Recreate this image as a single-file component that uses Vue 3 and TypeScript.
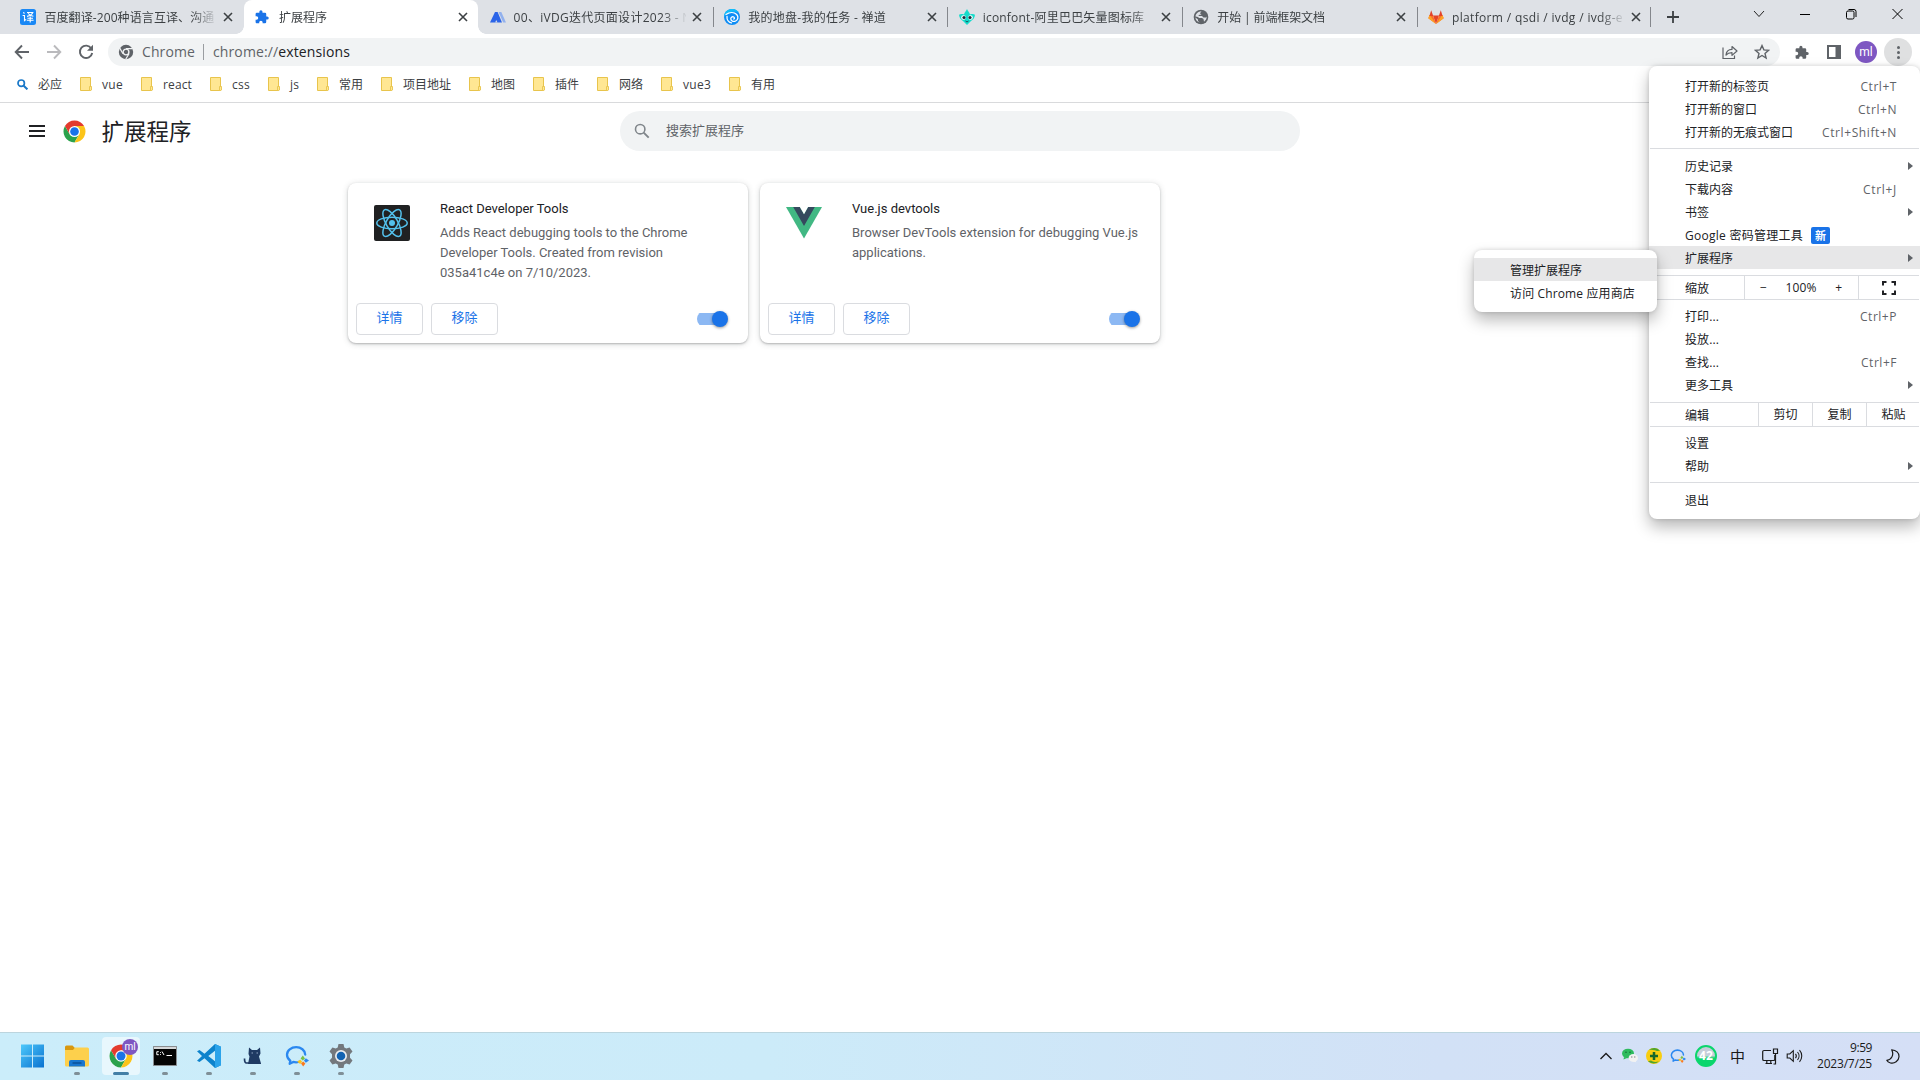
<script setup lang="ts">
interface Tab {
  title: string
  icon: string
  width?: number
  active?: boolean
  line?: boolean
}
interface Bookmark {
  label: string
  width: number
}
interface MenuRow {
  label: string
  keys?: string
  keysWidth?: number
  width?: number
  arrow?: boolean
  badge?: string
  on?: boolean
}
interface Extension {
  name: string
  nameWidth: number
  lines: { text: string; width: number }[]
  icon: 'react' | 'vue'
}

// Spreads a label's letters so that it takes up the given width.
const vFit = {
  mounted(el: HTMLElement, binding: { value?: number }) {
    if (!binding.value) return
    const natural = el.getBoundingClientRect().width
    const count = Array.from(el.textContent ?? '').length
    if (count > 0) el.style.letterSpacing = `${(binding.value - natural) / count}px`
  },
}

const tabs: Tab[] = [
  { title: '百度翻译-200种语言互译、沟通', icon: 'fanyi', width: 170 },
  { title: '扩展程序', icon: 'puzzle', active: true },
  { title: '00、iVDG迭代页面设计2023 - N', icon: 'axure', width: 178, line: true },
  { title: '我的地盘-我的任务 - 禅道', icon: 'zentao', width: 138, line: true },
  { title: 'iconfont-阿里巴巴矢量图标库', icon: 'iconfont', width: 161.5, line: true },
  { title: '开始 | 前端框架文档', icon: 'globe', width: 107.5, line: true },
  { title: 'platform / qsdi / ivdg / ivdg-e', icon: 'gitlab', width: 171, line: true },
]

const bookmarks: Bookmark[] = [
  { label: 'vue', width: 21 },
  { label: 'react', width: 29 },
  { label: 'css', width: 18 },
  { label: 'js', width: 9 },
  { label: '常用', width: 24 },
  { label: '项目地址', width: 48 },
  { label: '地图', width: 24 },
  { label: '插件', width: 24 },
  { label: '网络', width: 24 },
  { label: 'vue3', width: 28 },
  { label: '有用', width: 24 },
]

const extensions: Extension[] = [
  {
    name: 'React Developer Tools',
    nameWidth: 128.5,
    icon: 'react',
    lines: [
      { text: 'Adds React debugging tools to the Chrome', width: 247.5 },
      { text: 'Developer Tools. Created from revision', width: 223 },
      { text: '035a41c4e on 7/10/2023.', width: 151 },
    ],
  },
  {
    name: 'Vue.js devtools',
    nameWidth: 88,
    icon: 'vue',
    lines: [
      { text: 'Browser DevTools extension for debugging Vue.js', width: 286 },
      { text: 'applications.', width: 74 },
    ],
  },
]

const groupNew: MenuRow[] = [
  { label: '打开新的标签页', keys: 'Ctrl+T', keysWidth: 36.5 },
  { label: '打开新的窗口', keys: 'Ctrl+N', keysWidth: 39 },
  { label: '打开新的无痕式窗口', keys: 'Ctrl+Shift+N', keysWidth: 75 },
]
const groupData: MenuRow[] = [
  { label: '历史记录', arrow: true },
  { label: '下载内容', keys: 'Ctrl+J', keysWidth: 34 },
  { label: '书签', arrow: true },
  { label: 'Google 密码管理工具', width: 118, badge: '新' },
  { label: '扩展程序', arrow: true, on: true },
]
const groupPage: MenuRow[] = [
  { label: '打印...', width: 34, keys: 'Ctrl+P', keysWidth: 37 },
  { label: '投放...', width: 34 },
  { label: '查找...', width: 34, keys: 'Ctrl+F', keysWidth: 36 },
  { label: '更多工具', arrow: true },
]
const groupSettings: MenuRow[] = [{ label: '设置' }, { label: '帮助', arrow: true }]
const groupExit: MenuRow[] = [{ label: '退出' }]

const apps = ['start', 'files', 'chrome', 'cmd', 'vscode', 'cat', 'wecom', 'settings']
</script>

<template>
  <div class="screen">
    <svg width="0" height="0" class="defs">
      <defs>
        <symbol id="g-puzzle" viewBox="0 0 24 24">
          <path d="M20.5 11H19V7a2 2 0 0 0-2-2h-4V3.5a2.5 2.5 0 0 0-5 0V5H4a2 2 0 0 0-2 2v3.8h1.5a2.7 2.7 0 0 1 0 5.4H2V20c0 1.100.9 2 2 2h3.800v-1.500a2.700 2.700 0 0 1 5.400 0V22H17a2 2 0 0 0 2-2v-4h1.500a2.500 2.500 0 0 0 0-5z" fill="currentColor" />
        </symbol>
        <symbol id="g-chrome" viewBox="0 0 48 48">
          <circle cx="24" cy="24" r="23" fill="#fff" />
          <path d="M4.100 12.500A23 23 0 0 0 24 47l10-17.300L24 24 14 29.700z" fill="#2ba24c" />
          <path d="M43.900 12.500A23 23 0 0 1 24 47l10-17.300L24 24V12.500z" fill="#fcc419" />
          <path d="M4.100 12.500A23 23 0 0 1 43.900 12.500H24L14 29.700z" fill="#e33b2e" />
          <circle cx="24" cy="24" r="11.500" fill="#fff" />
          <circle cx="24" cy="24" r="9" fill="#1a73e8" />
        </symbol>
        <symbol id="g-wecom" viewBox="0 0 24 24">
          <path d="M20.200 10.500C20 6.200 16 3.200 11.200 3.200 6.200 3.200 2 6.500 2 10.800c0 2.500 1.300 4.500 3.300 5.900L4.700 19.800l3.500-1.900c1.700.5 3.700.5 5.300.1" fill="none" stroke="#2b88f0" stroke-width="2.300" stroke-linecap="round" stroke-linejoin="round" />
          <path d="m17.800 11.500 2.200 3-2.200 2-2.200-2z" fill="#7bc143" />
          <path d="m24 16.500-3.200 2.200-1.800-2.200 1.800-2.200z" fill="#2b88f0" />
          <path d="m18.200 22.500-2.200-3 2.200-2 2.200 2z" fill="#fb7a1e" />
          <path d="m12.200 17.800 3-2.200 2 2.200-2 2.200z" fill="#fcc419" />
        </symbol>
      </defs>
    </svg>

    <header class="tabstrip">
      <div v-for="tab in tabs" :key="tab.title" class="tab" :class="{ active: tab.active, line: tab.line && tab.icon !== 'axure' }">
        <svg v-if="tab.icon === 'fanyi'" class="fav" viewBox="0 0 16 16">
          <rect width="16" height="16" rx="2.500" fill="#1a88f5" />
          <path d="m3.300 3.300 1.200 1.200M2.600 6.500h1.900v5.200l1.600-1.300M7 3.500h5.800c-.8 1.800-2.800 3.200-5.800 3.900M8 4.200c1 1.500 2.700 2.500 5.400 3M10.200 7.500v6M7.400 9.200h5.600M6.800 11.300h6.800" fill="none" stroke="#fff" stroke-width="1.100" />
        </svg>
        <svg v-else-if="tab.icon === 'puzzle'" class="fav blue" viewBox="1 0 23 23"><use href="#g-puzzle" /></svg>
        <svg v-else-if="tab.icon === 'axure'" class="fav" viewBox="0 0 16 16">
          <path d="M8.500 3h2.800L16 13.500h-2.800z" fill="#92b1ee" />
          <path d="M5 3h2.600L12 13.500H0z" fill="#2b64e8" />
          <path d="m5.200 13.500 1-2.500 1.300 2.500z" fill="#dee1e6" />
        </svg>
        <svg v-else-if="tab.icon === 'zentao'" class="fav" viewBox="0 0 16 16">
          <circle cx="8" cy="8" r="8" fill="#0f8df5" />
          <path d="M0 8a8 8 0 0 1 15-4C11 2 4 2 0 8z" fill="#12bcfa" />
          <path d="M2 5.500c3.500-2.300 8-2.500 10.700 0 2 2.200 1.400 5.400-1 6.500-2.400 1.100-4.900 0-4.900-2.200 0-1.600 1.600-2.500 2.900-1.800 1 .6.900 1.700 0 2M3 7.500c-.3 3 1.500 5.700 4.500 6.300" fill="none" stroke="#fff" stroke-width="1.300" stroke-linecap="round" />
        </svg>
        <svg v-else-if="tab.icon === 'iconfont'" class="fav" viewBox="0 0 16 16">
          <path d="M8 0c.8 2.200 2.600 3.200 3 5.500 1.800-.6 3.500-.6 5 .2-.4 2.800-1.500 4.800-4 6.300L8 16l-4-4C1.500 10.500.4 8.500 0 5.700c1.500-.8 3.200-.8 5-.2C5.400 3.200 7.200 2.200 8 0z" fill="#15dccb" />
          <circle cx="4.500" cy="8.500" r="2.300" fill="#fff" /><circle cx="11.500" cy="8.500" r="2.300" fill="#fff" />
          <circle cx="5" cy="8.500" r="1.600" fill="#1d2b3a" /><circle cx="11" cy="8.500" r="1.600" fill="#1d2b3a" />
          <path d="m6.500 12 1.500 1 1.500-1" stroke="#1d4b5a" fill="none" />
        </svg>
        <svg v-else-if="tab.icon === 'globe'" class="fav" viewBox="0 0 16 16">
          <circle cx="8" cy="8" r="7.300" fill="#5f6368" />
          <path d="M8.500 2.300 7 4.200l1.500 1.500H6.500L5.200 7H9l1.500 1.500H13l.8-.9c-.1 2.200-1 3.900-2.800 5.100L10.500 10 9 9H6L5 8 2.500 7.500C2.700 4.800 5 2.400 8.500 2.300zM2.400 8.600 5 10.500v1.600l1.700 1.500C4.300 13 2.600 11.100 2.400 8.600z" fill="#dee1e6" />
        </svg>
        <svg v-else class="fav" viewBox="0 0 16 16">
          <path d="m8 15 3-8.500H5z" fill="#e24329" />
          <path d="M8 15 .3 9.300 1.500 6.500H5zM8 15l7.700-5.700-1.200-2.800H11z" fill="#fc6d26" />
          <path d="m.3 9.300 1.200-3.600L8 15zM15.700 9.300l-1.200-3.600L8 15z" fill="#fca326" />
          <path d="M1.400 7 3.200 1.300 5.200 7zM14.600 7l-1.800-5.700L10.800 7z" fill="#e24329" />
        </svg>
        <div class="tabtitle"><span v-fit="tab.width">{{ tab.title }}</span></div>
        <svg class="tabclose" viewBox="0 0 10 10"><path d="m1 1 8 8M9 1 1 9" stroke="#3c4043" stroke-width="1.600" /></svg>
      </div>
      <div class="newtab">
        <svg width="12" height="12" viewBox="0 0 12 12"><path d="M6 0v12M0 6h12" stroke="#3c4043" stroke-width="1.800" /></svg>
      </div>
      <div class="wincontrols">
        <span><svg width="12" height="12" viewBox="0 0 12 12"><path d="m1 3 5 5.500L11 3" stroke="#222" fill="none" /></svg></span>
        <span><svg width="10" height="12" viewBox="0 0 10 12"><path d="M0 6.500h10" stroke="#000" /></svg></span>
        <span><svg width="11" height="12" viewBox="0 0 11 12"><rect x=".5" y="3" width="7.500" height="8" rx="1.500" stroke="#000" fill="none" /><path d="M2.500 1.500H8A2 2 0 0 1 10 3.500v5.500" stroke="#000" fill="none" /></svg></span>
        <span><svg width="11" height="12" viewBox="0 0 11 12"><path d="m.5 1 10 10M10.500 1l-10 10" stroke="#000" fill="none" /></svg></span>
      </div>
    </header>

    <div class="toolbar">
      <svg class="nav back" viewBox="0 0 16 16"><path d="M15 8H2M8 1.500 1.700 8 8 14.500" stroke="#5f6368" stroke-width="1.900" fill="none" /></svg>
      <svg class="nav fwd" viewBox="0 0 16 16"><path d="M1 8h13M8 1.500 14.300 8 8 14.500" stroke="#bababd" stroke-width="1.900" fill="none" /></svg>
      <svg class="nav reload" viewBox="0 0 16 16"><path d="M13.300 4.400A6.200 6.200 0 1 0 14.200 9" stroke="#5f6368" stroke-width="1.900" fill="none" /><path d="M15 .8v6H9z" fill="#5f6368" /></svg>
      <div class="omnibox">
        <svg class="site" viewBox="0 0 16 16">
          <circle cx="8" cy="8" r="7.200" fill="#5f6368" />
          <circle cx="8" cy="8" r="2.900" fill="#5f6368" stroke="#f1f3f4" stroke-width="1.400" />
          <path d="M8 4.600h6.700M5 9.700 1.600 3.900M11 9.700 7.700 15.300" stroke="#f1f3f4" stroke-width="1.200" />
        </svg>
        <span v-fit="53" class="scheme">Chrome</span>
        <i class="bar"></i>
        <span v-fit="137" class="url"><em>chrome://</em>extensions</span>
        <svg class="share" viewBox="0 0 16 16"><path d="M1 3.500v11h11.500v-3" stroke="#5f6368" stroke-width="1.200" fill="none" /><path d="M4 11c.3-3.800 2.500-5.500 6-5.600V2.500L15 7l-5 4.400V8.700c-2.700 0-4.500.6-6 2.300z" stroke="#5f6368" stroke-width="1.200" fill="none" stroke-linejoin="round" /></svg>
        <svg class="star" viewBox="0 0 16 16"><path d="m8 1.600 1.900 4.300 4.700.4-3.600 3.100 1.100 4.600L8 11.500 3.900 14 5 9.400 1.400 6.300l4.700-.4z" stroke="#5f6368" stroke-width="1.400" fill="none" /></svg>
      </div>
      <svg class="ext" viewBox="1 0 23 23"><use href="#g-puzzle" /></svg>
      <svg class="panel" viewBox="0 0 14 14"><path d="M0 0h14v14H0zM2 2v10h6.500V2z" fill="#5f6368" fill-rule="evenodd" /></svg>
      <span class="avatar">ml</span>
      <span class="more"><i></i><i></i><i></i></span>
    </div>

    <nav class="bookmarks">
      <svg class="bing" viewBox="0 0 11 11"><circle cx="4.200" cy="4.200" r="3.200" stroke="#1a78c8" stroke-width="1.700" fill="none" /><path d="m6.700 6.700 3.700 3.700" stroke="#1a78c8" stroke-width="2" /></svg>
      <span class="bm first">必应</span>
      <template v-for="b in bookmarks" :key="b.label">
        <svg class="folder" viewBox="0 0 12 14"><path d="M.5.500h10v13H.5z" fill="#ffe793" stroke="#e8c44c" /><path d="M9.500 9.500h2v3.500l-1 .5h-1z" fill="#ffe793" stroke="#e8c44c" stroke-width=".9" /></svg>
        <span class="bm" :style="{ width: b.width + 'px' }"><span v-fit="b.width">{{ b.label }}</span></span>
      </template>
    </nav>

    <main class="page">
      <div class="pagehead">
        <div class="burger"><i></i><i></i><i></i></div>
        <svg class="logo" viewBox="0 0 48 48"><use href="#g-chrome" /></svg>
        <h1 v-fit="90">扩展程序</h1>
        <div class="search">
          <svg viewBox="0 0 16 16"><circle cx="6.200" cy="6.200" r="4.700" stroke="#80868b" stroke-width="1.600" fill="none" /><path d="m9.700 9.700 5 5" stroke="#80868b" stroke-width="1.900" /></svg>
          <span>搜索扩展程序</span>
        </div>
      </div>
      <div class="cards">
        <article v-for="e in extensions" :key="e.name" class="card">
          <div class="info">
            <svg v-if="e.icon === 'react'" class="exticon" viewBox="0 0 36 36">
              <rect width="36" height="36" rx="2" fill="#202122" />
              <g fill="none" stroke="#53c1ec" stroke-width="1.500">
                <ellipse cx="18" cy="18" rx="15.200" ry="5.800" />
                <ellipse cx="18" cy="18" rx="15.200" ry="5.800" transform="rotate(60 18 18)" />
                <ellipse cx="18" cy="18" rx="15.200" ry="5.800" transform="rotate(120 18 18)" />
              </g>
              <circle cx="18" cy="18" r="3" fill="#53c1ec" />
            </svg>
            <svg v-else class="exticon" viewBox="0 0 36 36">
              <path d="M0 2h36L18 33.500z" fill="#41b883" />
              <path d="M7.200 2h6.700L18 9.200 22.100 2h6.700L18 21z" fill="#35495e" />
              <path d="M13.900 2h8.200L18 9.200z" fill="#fff" />
            </svg>
            <div class="about">
              <h2><span v-fit="e.nameWidth">{{ e.name }}</span></h2>
              <p v-for="l in e.lines" :key="l.text"><span v-fit="l.width">{{ l.text }}</span></p>
            </div>
          </div>
          <div class="actions">
            <button>详情</button>
            <button>移除</button>
            <div class="toggle"><i></i></div>
          </div>
        </article>
      </div>
    </main>

    <footer class="taskbar">
      <div class="apps">
        <div v-for="a in apps" :key="a" class="app" :class="{ current: a === 'chrome', running: a !== 'start' }">
          <svg v-if="a === 'start'" viewBox="0 0 24 24">
            <defs><linearGradient id="win" x1="0" y1="0" x2="1" y2="1"><stop offset="0" stop-color="#4cc8fb" /><stop offset="1" stop-color="#0a72d0" /></linearGradient></defs>
            <path d="M0 .500h11v11H0zM12 .500h11v11H12zM0 12.500h11v11H0zM12 12.500h11v11H12z" fill="url(#win)" />
          </svg>
          <svg v-else-if="a === 'files'" viewBox="0 0 24 24">
            <path d="M0 3a1.500 1.500 0 0 1 1.500-1.500h6L10 4v3H0z" fill="#d9980f" />
            <path d="M0 6h8l2-2.500h12.500A1.500 1.500 0 0 1 24 5v16a1.500 1.500 0 0 1-1.500 1.500h-21A1.500 1.500 0 0 1 0 21z" fill="#fdd04c" />
            <path d="M4 22.500V18a2 2 0 0 1 2-2h12a2 2 0 0 1 2 2v4.500z" fill="#1877cf" /><path d="M7.500 19h9" stroke="#0c539c" stroke-width="1.600" />
          </svg>
          <svg v-else-if="a === 'chrome'" viewBox="0 0 48 48"><use href="#g-chrome" /></svg>
          <svg v-else-if="a === 'cmd'" viewBox="0 0 24 24">
            <path d="M.5 2.500h23v19H.5z" fill="#050505" stroke="#8a8d90" /><path d="M1 3h22v2H1z" fill="#d5d7d9" />
            <path d="M5.800 7.700H3.800v3h2M7.500 8v.8M7.500 10v.8M9 7.500l2 3.500M13.500 11.500h5.500" stroke="#fff" stroke-width="1" fill="none" />
          </svg>
          <svg v-else-if="a === 'vscode'" viewBox="0 0 24 24">
            <path d="M18 0 24 2.800v18.400L18 24 7.500 14.300 2.500 18 0 16.700 5 12 0 7.300 2.500 6l5 3.700zM18 6.800 11.300 12 18 17.200z" fill="#0d83cc" fill-rule="evenodd" />
            <path d="m18 0 6 2.800v18.400L18 24z" fill="#2aa3ea" />
          </svg>
          <svg v-else-if="a === 'cat'" viewBox="0 0 24 24">
            <path d="M8 3.500 11 6h5l3-2.500.5 6-1.500 3 2 7V20H7l1.500-7.500L7.500 10z" fill="#1f3a63" />
            <path d="M8 19H5.500C3.500 19 3.500 16 3.500 14.500" stroke="#1f3a63" stroke-width="1.700" fill="none" />
            <path d="M10.500 9h1.500M15.500 9H17" stroke="#9db3d0" stroke-width=".9" />
          </svg>
          <svg v-else-if="a === 'wecom'" viewBox="0 0 24 24"><use href="#g-wecom" /></svg>
          <svg v-else viewBox="0 0 24 24">
            <path d="M9.500 0h5l.8 3.400 2 1.100L20.600 3.400 23.500 7.500 21 10.200v3.600l2.500 2.700-2.900 4.100-3.300-1.100-2 1.100-.8 3.400h-5l-.8-3.400-2-1.100-3.300 1.100L.5 16.500 3 13.800v-3.600L.5 7.500 3.400 3.400 6.700 4.500l2-1.100z" fill="#73787d" />
            <circle cx="12" cy="12" r="6" fill="#e9edf0" /><circle cx="12" cy="12" r="4.300" fill="#1263b2" />
          </svg>
          <span v-if="a === 'chrome'" class="mini">ml</span>
        </div>
      </div>
      <div class="tray">
        <svg class="up" viewBox="0 0 12 8"><path d="m.5 7 5.500-5.500L11.500 7" stroke="#1a1a1a" stroke-width="1.300" fill="none" /></svg>
        <svg class="t16" viewBox="0 0 16 16">
          <ellipse cx="6" cy="5.500" rx="6" ry="4.800" fill="#2dbb5d" /><path d="m2 9-.5 2.500L5 10z" fill="#2dbb5d" />
          <circle cx="4" cy="4.200" r=".8" fill="#176b35" /><circle cx="8" cy="4.200" r=".8" fill="#176b35" />
          <ellipse cx="11.300" cy="10" rx="4.700" ry="3.900" fill="#f2f2f2" /><path d="m13.500 12.500.8 1.800-3-.8z" fill="#f2f2f2" />
          <circle cx="9.800" cy="9" r=".7" fill="#888" /><circle cx="12.800" cy="9" r=".7" fill="#888" />
        </svg>
        <svg class="t16" viewBox="0 0 16 16">
          <circle cx="8" cy="8" r="8" fill="#f8cd10" /><path d="M3 1.800A8 8 0 0 1 14 2.700L11 3C8 2 5.500 2 3 1.800zM2 13.300a8 8 0 0 0 11-.1c-3 1-6 1-8-.7z" fill="#50a52e" />
          <path d="M8 4v8M4 8h8" stroke="#17682a" stroke-width="2.500" />
        </svg>
        <svg class="t16" viewBox="0 0 24 24"><use href="#g-wecom" /></svg>
        <span class="score">42</span>
        <span class="ime">中</span>
        <svg class="net" viewBox="0 0 17 17"><path d="M9 2.500H2A1.300 1.300 0 0 0 .7 3.800v7.400A1.300 1.300 0 0 0 2 12.500h9.500a1.300 1.300 0 0 0 1.300-1.300V7M3.500 15.500h6.500M4.800 12.500v3M8.800 12.500v3" stroke="#1a1a1a" stroke-width="1.200" fill="none" /><path d="M11.500 1h4v4.500h-4zM13.500 5.500v10.500h-2" stroke="#1a1a1a" stroke-width="1.200" fill="none" /></svg>
        <svg class="vol" viewBox="0 0 16 16"><path d="M.7 6v4h2.600l3.500 3.300V2.700L3.300 6zM9 5.800c1 1.300 1 3.100 0 4.400M11 4c2 2.300 2 5.700 0 8M13 2.200c3 3.300 3 8.300 0 11.600" stroke="#1a1a1a" stroke-width="1.100" fill="none" /></svg>
        <div class="clock"><span><b v-fit="22">9:59</b></span><span><b v-fit="55">2023/7/25</b></span></div>
        <svg class="moon" viewBox="0 0 14 15"><path d="M5.700.8c4.500.2 7.500 3 7.300 7C12.700 12 8.500 15 4.500 14 2.700 13.500 1.300 12.500.8 11.300 5 11 8.500 6.500 5.700.8z" stroke="#1a1a1a" stroke-width="1.200" fill="none" stroke-linejoin="round" /></svg>
      </div>
    </footer>

    <section class="menu">
      <div v-for="r in groupNew" :key="r.label" class="row"><span v-fit="r.width">{{ r.label }}</span><kbd><b v-fit="r.keysWidth">{{ r.keys }}</b></kbd></div>
      <hr class="rule" />
      <div v-for="r in groupData" :key="r.label" class="row" :class="{ on: r.on }">
        <span v-fit="r.width">{{ r.label }}</span>
        <mark v-if="r.badge">{{ r.badge }}</mark>
        <kbd v-if="r.keys"><b v-fit="r.keysWidth">{{ r.keys }}</b></kbd>
        <i v-if="r.arrow" class="arrow"></i>
      </div>
      <div class="split zoom">
        <span class="name">缩放</span>
        <div class="level"><span>−</span><span v-fit="31">100%</span><span>+</span></div>
        <div class="full"><svg width="14" height="14" viewBox="0 0 14 14"><path d="M1 4.500V1h3.500M9.500 1H13v3.500M13 9.500V13H9.500M4.500 13H1V9.500" stroke="#202124" stroke-width="2" fill="none" /></svg></div>
      </div>
      <div v-for="r in groupPage" :key="r.label" class="row">
        <span v-fit="r.width">{{ r.label }}</span>
        <kbd v-if="r.keys"><b v-fit="r.keysWidth">{{ r.keys }}</b></kbd>
        <i v-if="r.arrow" class="arrow"></i>
      </div>
      <div class="split edit">
        <span class="name">编辑</span>
        <div class="cell">剪切</div><div class="cell">复制</div><div class="cell">粘贴</div>
      </div>
      <div v-for="r in groupSettings" :key="r.label" class="row"><span>{{ r.label }}</span><i v-if="r.arrow" class="arrow"></i></div>
      <hr class="rule" />
      <div v-for="r in groupExit" :key="r.label" class="row"><span>{{ r.label }}</span></div>
    </section>

    <section class="submenu">
      <div class="row on"><span>管理扩展程序</span></div>
      <div class="row"><span v-fit="125">访问 Chrome 应用商店</span></div>
    </section>
  </div>
</template>

<style>
html,
body {
  overflow: hidden;
  background: #fff;
}
</style>

<style scoped>
* {
  box-sizing: border-box;
}
.screen {
  position: relative;
  width: 1920px;
  height: 1080px;
  display: flex;
  flex-direction: column;
  background: #fff;
  color: #202124;
  font: 12px/16px 'Open Sans', 'Noto Sans CJK SC', sans-serif;
  overflow: hidden;
  white-space: nowrap;
}
svg {
  display: block;
  flex: none;
}
.defs {
  position: absolute;
}
.tabstrip {
  height: 34px;
  flex: none;
  display: flex;
  background: #dee1e6;
  padding-left: 9px;
}
.tab {
  position: relative;
  width: 234.6px;
  flex: none;
  display: flex;
  align-items: center;
  padding-left: 11.4px;
  color: #3c4043;
}
.tab.line::before {
  content: '';
  position: absolute;
  left: 0;
  top: 7px;
  width: 1px;
  height: 20px;
  background: #84878c;
}
.tab.active {
  background: #fff;
  border-radius: 8px 8px 0 0;
}
.tab.active::before,
.tab.active::after {
  content: '';
  position: absolute;
  bottom: 0;
  width: 8px;
  height: 8px;
}
.tab.active::before {
  left: -8px;
  background: radial-gradient(circle at 0 0, #dee1e6 7.5px, #fff 8px);
}
.tab.active::after {
  right: -8px;
  background: radial-gradient(circle at 100% 0, #dee1e6 7.5px, #fff 8px);
}
.fav {
  width: 16px;
  height: 16px;
}
.fav.blue {
  color: #1a73e8;
  width: 15px;
  margin-right: 1px;
}
.tabtitle {
  width: 172px;
  margin-left: 8px;
  padding-top: 1px;
  overflow: hidden;
  mask-image: linear-gradient(90deg, #000 148px, transparent 174px);
}
.tabclose {
  width: 10px;
  height: 10px;
  margin-left: 6.6px;
}
.newtab {
  position: relative;
  width: 46px;
  display: flex;
  align-items: center;
  padding-left: 16px;
}
.newtab::before {
  content: '';
  position: absolute;
  left: -1px;
  top: 7px;
  width: 1px;
  height: 20px;
  background: #84878c;
}
.wincontrols {
  margin-left: auto;
  display: flex;
  height: 28px;
}
.wincontrols span {
  width: 46px;
  display: flex;
  align-items: center;
  justify-content: center;
}
.toolbar {
  height: 36px;
  flex: none;
  display: flex;
  align-items: center;
  padding: 0 8px 0 14px;
}
.nav {
  width: 16px;
  height: 16px;
  margin-right: 16px;
}
.reload {
  margin-right: 14px;
}
.omnibox {
  width: 1672px;
  height: 28px;
  border-radius: 14px;
  background: #f1f3f4;
  display: flex;
  align-items: center;
  padding-left: 10px;
  font-size: 14px;
  color: #5f6368;
}
.site {
  width: 16px;
  height: 16px;
  margin-right: 8px;
}
.bar {
  width: 1px;
  height: 16px;
  background: #9a9da1;
  margin: 0 9px 0 8px;
}
.url {
  color: #202124;
}
.url em {
  font-style: normal;
  color: #5f6368;
}
.share {
  width: 16px;
  height: 16px;
  margin-left: auto;
}
.star {
  width: 16px;
  height: 16px;
  margin: 0 10px 0 16px;
}
.ext {
  width: 15px;
  height: 15px;
  margin-left: 15px;
  color: #5f6368;
}
.panel {
  width: 14px;
  height: 14px;
  margin-left: 17px;
}
.avatar {
  width: 22px;
  height: 22px;
  margin-left: 14px;
  border-radius: 50%;
  background: #7e57c2;
  color: #fff;
  font: 12px/22px Roboto, sans-serif;
  text-align: center;
}
.more {
  width: 28px;
  height: 28px;
  margin-left: 7px;
  border-radius: 50%;
  background: #dfe0e1;
  display: flex;
  flex-direction: column;
  align-items: center;
  justify-content: center;
  gap: 2px;
}
.more i {
  width: 3px;
  height: 3px;
  border-radius: 50%;
  background: #5f6368;
}
.bookmarks {
  height: 33px;
  flex: none;
  display: flex;
  align-items: center;
  padding-left: 17px;
  border-bottom: 1px solid #d9dadc;
  padding-bottom: 4px;
  color: #3c4043;
}
.bm {
  padding-top: 2px;
}
.bing {
  width: 11px;
  height: 11px;
  margin-right: 10px;
}
.folder {
  width: 12px;
  height: 14px;
  margin: 0 10px 0 18px;
}
.page {
  flex: 1;
}
.pagehead {
  height: 56px;
  display: flex;
  align-items: center;
  padding-left: 29px;
}
.burger {
  width: 16px;
  display: flex;
  flex-direction: column;
  gap: 3px;
}
.burger i {
  height: 2px;
  background: #202124;
}
.logo {
  width: 23px;
  height: 23px;
  margin: 0 16px 0 17.500px;
}
h1 {
  font: 22.5px/30px Roboto, 'Noto Sans CJK SC', sans-serif;
  margin: 0;
  padding-top: 2px;
}
.search {
  width: 680px;
  height: 40px;
  margin-left: auto;
  margin-right: 620px;
  border-radius: 20px;
  background: #f1f3f4;
  display: flex;
  align-items: center;
  padding-left: 14px;
  font-size: 13px;
  color: #5f6368;
}
.search span {
  padding-bottom: 3px;
}
.search svg {
  width: 16px;
  height: 16px;
  margin-right: 16px;
}
.cards {
  display: flex;
  gap: 12px;
  padding: 24px 0 0 348px;
}
.card {
  width: 400px;
  height: 160px;
  border-radius: 8px;
  background: #fff;
  box-shadow: 0 1px 2px rgba(60, 64, 67, 0.3), 0 1px 6px rgba(60, 64, 67, 0.2);
  display: flex;
  flex-direction: column;
  font-family: Roboto, 'Noto Sans CJK SC', sans-serif;
}
.info {
  display: flex;
  padding: 16px 0 0 26px;
  height: 120px;
}
.exticon {
  width: 36px;
  height: 36px;
  margin: 6px 30px 0 0;
}
h2 {
  font: 13px/20px Roboto, sans-serif;
  margin: 0 0 4px;
}
p {
  margin: 0;
  font-size: 13px;
  line-height: 20px;
  color: #5f6368;
}
.actions {
  display: flex;
  align-items: center;
  gap: 8px;
  padding: 0 20px 0 8px;
}
button {
  width: 67px;
  height: 32px;
  border: 1px solid #dadce0;
  border-radius: 4px;
  background: #fff;
  color: #1a73e8;
  font: 13px/20px 'Noto Sans CJK SC', sans-serif;
  padding: 0 0 4px;
}
.toggle {
  margin-left: auto;
  width: 31px;
  height: 16px;
  display: flex;
  align-items: center;
  justify-content: flex-end;
  background: linear-gradient(#8cb8f3, #8cb8f3) 0 2px / 26px 12px no-repeat;
  border-radius: 8px;
}
.toggle i {
  width: 16px;
  height: 16px;
  border-radius: 50%;
  background: #1a73e8;
  box-shadow: 0 1px 3px rgba(0, 0, 0, 0.4);
}
.taskbar {
  height: 48px;
  flex: none;
  display: flex;
  justify-content: space-between;
  border-top: 1px solid #bcd5de;
  background: linear-gradient(90deg, #cbedfa, #ccebf9 40%, #d2e1f6 75%, #d5dff6);
}
.apps {
  display: flex;
  padding-left: 11px;
}
.app {
  position: relative;
  width: 44px;
  display: flex;
  justify-content: center;
  padding-top: 11px;
}
.app svg {
  position: relative;
  width: 24px;
  height: 24px;
}
.app.running::after {
  content: '';
  position: absolute;
  left: 19px;
  bottom: 5px;
  width: 6px;
  height: 3px;
  border-radius: 2px;
  background: #7f8f97;
}
.app.current::before {
  content: '';
  position: absolute;
  left: 3px;
  top: 4px;
  width: 38px;
  height: 38px;
  border-radius: 4px;
  background: #e8f7fd;
}
.app.current::after {
  left: 14px;
  width: 16px;
  background: #437fa6;
}
.mini {
  position: absolute;
  left: 23px;
  top: 6px;
  width: 16px;
  height: 16px;
  border-radius: 50%;
  background: #7e57c2;
  color: #fff;
  font: 10px/15px Roboto, sans-serif;
  text-align: center;
}
.tray {
  display: flex;
  align-items: center;
  padding-right: 20px;
  padding-bottom: 1px;
  color: #1a1a1a;
}
.up {
  width: 12px;
  height: 8px;
  margin-right: 10px;
}
.t16 {
  width: 16px;
  height: 16px;
  margin-right: 8px;
}
.score {
  width: 22px;
  height: 22px;
  margin-left: 1px;
  border-radius: 50%;
  border: 2px solid #0bd66d;
  background: linear-gradient(#c5ced9 48%, #0bd66d 62%);
  color: #fff;
  font: bold 12px/18px 'Open Sans', sans-serif;
  text-align: center;
}
.ime {
  font-size: 15px;
  margin: 0 17px 0 13px;
}
.net {
  width: 17px;
  height: 17px;
  margin-right: 7px;
}
.vol {
  width: 17px;
  height: 16px;
  margin-right: 14px;
}
.clock {
  display: flex;
  flex-direction: column;
  align-items: flex-end;
  width: 55px;
}
.clock b,
kbd b {
  font-weight: normal;
}
.moon {
  width: 14px;
  height: 15px;
  margin-left: 14px;
}
.menu {
  position: absolute;
  left: 1649px;
  top: 66px;
  width: 271px;
  height: 453px;
  padding-top: 8px;
  border-radius: 8px;
  background: #fff;
  box-shadow: 0 8px 16px rgba(0, 0, 0, 0.28), 0 0 4px rgba(0, 0, 0, 0.14);
}
.row {
  height: 23px;
  display: flex;
  align-items: center;
  padding: 3px 8px 0 36px;
}
.row.on {
  background: #e7e7e8;
}
kbd {
  font-family: inherit;
  margin-left: auto;
  margin-right: 15px;
  color: #5f6368;
}
mark {
  width: 19px;
  height: 17px;
  margin-left: 8px;
  margin-top: -2px;
  border-radius: 2px;
  background: #1a73e8;
  color: #fff;
  font: bold 11px/17px 'Noto Sans CJK SC', sans-serif;
  text-align: center;
}
.arrow {
  margin: -2px -1px 0 auto;
  border-left: 5px solid #5f6368;
  border-top: 4px solid transparent;
  border-bottom: 4px solid transparent;
}
.rule {
  border: 0;
  height: 1px;
  margin: 5px 1px;
  background: #dadce0;
}
.split {
  height: 25px;
  margin: 6px 1px 4px;
  border-top: 1px solid #dadce0;
  border-bottom: 1px solid #dadce0;
  display: flex;
  align-items: stretch;
  line-height: 24px;
}
.name {
  flex: none;
  padding: 1px 0 0 35px;
}
.zoom .name {
  width: 94px;
}
.level {
  width: 115px;
  border-left: 1px solid #dadce0;
  border-right: 1px solid #dadce0;
  display: flex;
  justify-content: space-between;
  padding: 0 16px 0 15px;
}
.full {
  flex: 1;
  display: flex;
  align-items: center;
  padding-left: 23px;
}
.edit .name {
  width: 108px;
}
.cell {
  width: 54px;
  flex: none;
  border-left: 1px solid #dadce0;
  text-align: center;
}
.submenu {
  position: absolute;
  left: 1474px;
  top: 250px;
  width: 183px;
  height: 62px;
  padding: 8px 0;
  border-radius: 8px;
  background: #fff;
  box-shadow: 0 8px 16px rgba(0, 0, 0, 0.28), 0 0 4px rgba(0, 0, 0, 0.14);
}
</style>
